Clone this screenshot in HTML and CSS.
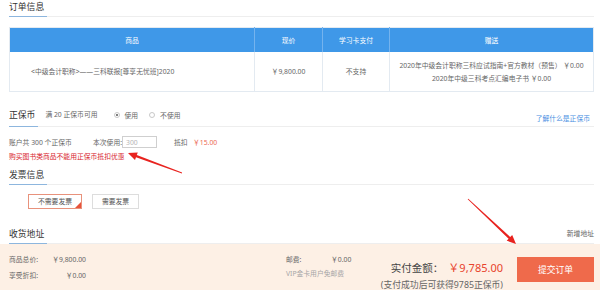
FILE: index.html
```html
<!DOCTYPE html>
<html lang="zh-CN">
<head>
<meta charset="utf-8">
<title>订单信息</title>
<link rel="stylesheet" href="styles.css">
</head>
<body>
<div class="main">
  <div class="head"><span class="head-title">订单信息</span></div>
  <table class="order">
    <thead>
      <tr><th class="c-goods">商品</th><th class="c-price">现价</th><th class="c-card">学习卡支付</th><th class="c-gift">赠送</th></tr>
    </thead>
    <tbody>
      <tr>
        <td class="goods">&lt;中级会计职称&gt;——三科联报[尊享无忧班]2020</td>
        <td>￥9,800.00</td>
        <td>不支持</td>
        <td class="gift"><div>2020年中级会计职称三科应试指南+官方教材（预售） ￥0.00</div><div>2020年中级三科考点汇编电子书 ￥0.00</div></td>
      </tr>
    </tbody>
  </table>

  <div class="head head-zb">
    <span class="head-title">正保币</span>
    <span class="zb-info">满 20 正保币可用</span>
    <span class="radio radio-first radio-on"><i class="dot"></i>使用</span>
    <span class="radio radio-second"><i class="dot"></i>不使用</span>
    <a class="zb-link">了解什么是正保币</a>
  </div>
  <div class="use-row">
    <span class="acct">账户共 300 个正保币</span>
    <span class="use-label">本次使用:</span>
    <input class="use-input" type="text" placeholder="300">
    <span class="deduct">抵扣</span>
    <span class="deduct-val">￥15.00</span>
  </div>
  <div class="warn">购买图书类商品不能用正保币抵扣优惠</div>

  <div class="head head-inv"><span class="head-title">发票信息</span></div>
  <div class="inv-row">
    <span class="inv-btn inv-on">不需要发票</span>
    <span class="inv-btn">需要发票</span>
  </div>

  <div class="head head-addr">
    <span class="head-title">收货地址</span>
    <a class="addr-new">新增地址</a>
  </div>
</div>

<div class="footer">
  <div class="sum">
    <div class="sum-row"><span>商品总价:</span><span>￥9,800.00</span></div>
    <div class="sum-row"><span>享受折扣:</span><span>￥0.00</span></div>
  </div>
  <div class="post">
    <div class="post-row"><span class="post-label">邮费:</span><span>￥0.00</span></div>
    <div class="post-note">VIP金卡用户免邮费</div>
  </div>
  <div class="pay">
    <div class="pay-total"><span class="pay-label">实付金额：</span><span class="pay-amount">￥9,785.00</span></div>
    <div class="pay-note">(支付成功后可获得9785正保币)</div>
  </div>
  <button class="submit">提交订单</button>
</div>

<svg class="annot" width="600" height="290" viewBox="0 0 600 290">
  <polygon fill="#e8231f" points="128,153 137.8,152.4 136.8,155.0 182.1,172.6 181.9,173.4 136.0,157.2 135.0,159.9"/>
  <polygon fill="#e8231f" points="516,244 512.2,234.9 510.2,237.0 468.3,198.7 467.7,199.3 508.6,238.7 506.7,240.7"/>
</svg>
</body>
</html>
```
FILE: styles.css
```css
html, body {
  margin: 0;
  padding: 0;
}
body {
  width: 600px;
  height: 290px;
  overflow: hidden;
  position: relative;
  background: #fff;
  font-family: "Noto Sans", "Noto Sans CJK SC", sans-serif;
  font-size: 6.8px;
  color: #666;
}
.main {
  padding: 1px 6px 0 9px;
}
.head {
  display: flex;
  align-items: flex-end;
  border-bottom: 1px solid #eeeeee;
}
.head-title {
  font-size: 8.8px;
  line-height: 12px;
  color: #333;
  padding: 0 3px 3px 0;
  border-bottom: 1px solid #8db6de;
  margin-bottom: -1px;
}

/* order table */
.order {
  margin-top: 10px;
  width: 585px;
  border-collapse: collapse;
  table-layout: fixed;
  border: 1px solid #e3eaf1;
}
.order th {
  height: 24px;
  padding: 0;
  background: #3f98e8;
  color: #fff;
  font-weight: normal;
  border-right: 1px solid #74b3ee;
  text-align: center;
}
.order th:last-child { border-right: 0; }
.c-goods { width: 244px; }
.c-price { width: 67px; }
.c-card { width: 66px; }
.order td {
  height: 39px;
  padding: 0;
  text-align: center;
  border-right: 1px solid #e3eaf1;
  line-height: 13px;
}
.order td.goods {
  text-align: left;
  padding-left: 21px;
}

/* 正保币 */
.head-zb { margin-top: 17px; }
.head-zb .head-title { padding-bottom: 5px; }
.zb-info {
  margin-left: 7px;
  line-height: 12px;
  padding-bottom: 5px;
}
.radio {
  display: flex;
  align-items: center;
  height: 12px;
  padding-bottom: 5px;
}
.radio-first { margin-left: 16px; }
.radio-second { margin-left: 11px; }
.dot {
  width: 4px;
  height: 4px;
  border: 1px solid #c8c8c8;
  border-radius: 50%;
  margin-right: 5px;
  box-sizing: content-box;
  position: relative;
}
.radio-on .dot::after {
  content: "";
  position: absolute;
  left: 1px;
  top: 1px;
  width: 2px;
  height: 2px;
  border-radius: 50%;
  background: #555;
}
.zb-link {
  margin-left: auto;
  line-height: 12px;
  padding: 0 4px 1px 0;
  color: #4a8fe2;
}
.use-row {
  margin-top: 9px;
  display: flex;
  align-items: center;
  height: 12px;
}
.acct { width: 84px; }
.use-label { width: 29px; }
.use-input {
  width: 35px;
  height: 12px;
  box-sizing: border-box;
  margin: 0;
  padding: 0 0 0 3px;
  border: 1px solid #cfcfcf;
  font: inherit;
  color: #999;
  outline: none;
}
.use-input::placeholder { color: #b5b5b5; }
.deduct {
  margin-left: 17px;
  width: 19px;
}
.deduct-val { color: #ec6a55; }
.warn {
  margin-top: 3px;
  line-height: 12px;
  color: #d8242c;
}

/* 发票 */
.head-inv { margin-top: 6px; }
.inv-row {
  margin-top: 9px;
  display: flex;
  gap: 10px;
  padding-left: 19px;
}
.inv-btn {
  position: relative;
  height: 15px;
  box-sizing: border-box;
  border: 1px solid #dddddd;
  line-height: 13px;
  padding: 0 9px;
  color: #555;
}
.inv-on {
  border-color: #e8927c;
}
.inv-on::after {
  content: "";
  position: absolute;
  right: 0;
  bottom: 0;
  width: 0;
  height: 0;
  border-style: solid;
  border-width: 0 0 6px 6px;
  border-color: transparent transparent #e8533b transparent;
}

/* 收货地址 */
.head-addr { margin-top: 19px; }
.addr-new {
  margin-left: auto;
  line-height: 12px;
  padding-bottom: 3px;
  color: #666;
}

/* footer */
.footer {
  display: flex;
  align-items: flex-start;
  height: 50px;
  background: #fdf0e5;
  padding: 0 6px 0 9px;
}
.sum {
  width: 77px;
  padding-top: 8px;
}
.sum-row {
  display: flex;
  justify-content: space-between;
  line-height: 16px;
}
.post {
  margin-left: 200px;
  padding-top: 8px;
}
.post-row {
  display: flex;
  line-height: 16px;
}
.post-label { width: 45px; }
.post-note {
  line-height: 12px;
  color: #a5a5a5;
}
.pay {
  margin-left: auto;
  padding-top: 16px;
  text-align: right;
}
.pay-total {
  line-height: 16px;
  white-space: nowrap;
}
.pay-label {
  font-size: 10.5px;
  color: #444;
}
.pay-amount {
  margin-left: 5px;
  font-size: 11px;
  color: #e8432c;
}
.pay-note {
  margin-top: 1px;
  line-height: 12px;
  font-size: 8.8px;
  color: #666;
}
.submit {
  margin-left: 14px;
  margin-top: 13px;
  width: 77px;
  height: 25px;
  border: 0;
  padding: 0;
  background: #ef6a4b;
  color: #fff;
  font-family: inherit;
  font-size: 8.8px;
}

.annot {
  position: absolute;
  left: 0;
  top: 0;
  pointer-events: none;
}
```
